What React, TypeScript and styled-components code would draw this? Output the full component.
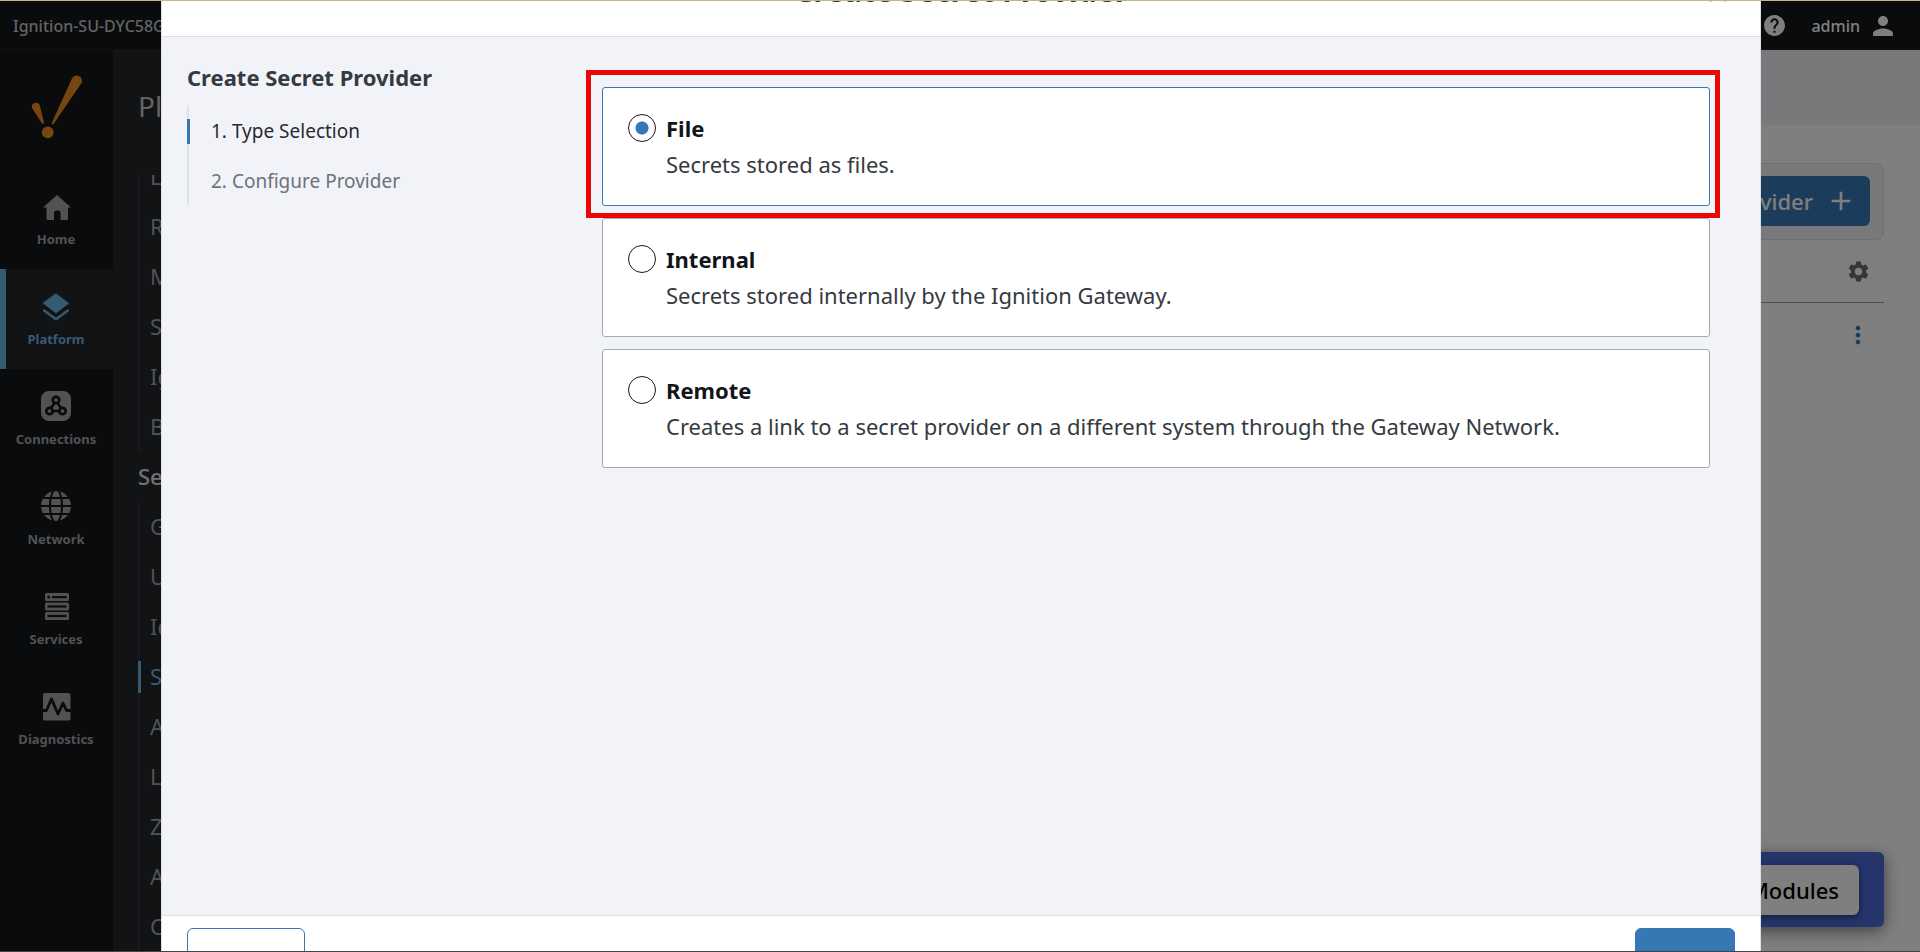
import React, { useState } from "react";
import styled, { createGlobalStyle } from "styled-components";
import { MdHelp, MdPerson, MdSettings, MdAdd, MdMoreVert, MdClose } from "react-icons/md";

const GlobalStyle = createGlobalStyle`
  * { box-sizing: border-box; }
  html, body, #root { height: 100%; margin: 0; }
  body { overflow: hidden; }
  body, button, input { font-family: "Noto Sans", "Open Sans", sans-serif; }
  a { color: inherit; text-decoration: none; }
  ul, ol { list-style: none; margin: 0; padding: 0; }
  h1, h2, h3, p { margin: 0; }
`;

const Shell = styled.div`
  position: relative;
  height: 100vh;
  display: flex;
  flex-direction: column;
  overflow: hidden;
  background: #fff;
`;

const TopBar = styled.header`
  height: 50px;
  flex: none;
  display: flex;
  align-items: center;
  justify-content: space-between;
  padding: 2px 22px 0 13px;
  background: #14161a;
  border-bottom: 1px solid #24262a;
  color: #fff;
  font-size: 16px;
  font-weight: 500;
`;

const GatewayName = styled.span`
  color: #c4c6c8;
`;

const UserTools = styled.div`
  display: flex;
  align-items: center;
  gap: 24px;
`;

const IconButton = styled.button<{ $color?: string }>`
  display: flex;
  align-items: center;
  gap: 8px;
  padding: 0;
  border: 0;
  background: none;
  color: ${(p) => p.$color ?? "inherit"};
  font-size: 16px;
  font-weight: 500;
`;

const Workspace = styled.div`
  flex: 1;
  min-height: 0;
  display: flex;
`;

const Sidebar = styled.nav`
  width: 113px;
  flex: none;
  background: #14161a;
`;

const Brand = styled.div`
  height: 119px;
  padding: 24px 0 0 31px;
`;

const SideLink = styled.a<{ $active?: boolean }>`
  height: 100px;
  display: flex;
  flex-direction: column;
  align-items: center;
  gap: 7px;
  padding: 21px 1px 0 0;
  font-size: 13px;
  line-height: 20px;
  font-weight: 700;
  color: ${(p) => (p.$active ? "#6fb4e6" : "#a2a4a8")};
  background: ${(p) => (p.$active ? "#24262a" : "transparent")};
  box-shadow: ${(p) => (p.$active ? "inset 6px 0 #6fb4e6" : "none")};
`;

const SubNav = styled.nav`
  width: 300px;
  flex: none;
  display: flex;
  flex-direction: column;
  padding-left: 25px;
  background: #24262a;
  color: #a2a4a8;
  font-size: 22px;
`;

const SubNavTitle = styled.h2`
  height: 125px;
  flex: none;
  padding-top: 36px;
  color: #c4c6c8;
  font-size: 28px;
  line-height: 40px;
  font-weight: 400;
`;

const SubNavScroll = styled.div`
  flex: 1;
  min-height: 0;
  display: flex;
  flex-direction: column;
  justify-content: flex-start;
  overflow: hidden;
`;

const SubNavGroup = styled.ul<{ $scrolled?: boolean }>`
  flex: none;
  border-left: 2px solid #32343a;
  margin-top: ${(p) => (p.$scrolled ? "-23px" : "0")};
`;

const SubNavHeading = styled.h3`
  flex: none;
  padding-bottom: 2px;
  font-size: 22px;
  line-height: 48px;
  font-weight: 500;
  color: #e0e2e4;
`;

const SubNavLink = styled.a<{ $active?: boolean }>`
  height: 50px;
  display: flex;
  align-items: flex-start;
  line-height: 48px;
  color: ${(p) => (p.$active ? "#6fb4e6" : "inherit")};

  &::before {
    content: "";
    width: 3px;
    height: 32px;
    margin: 9px 9px 0 -2px;
    background: ${(p) => (p.$active ? "#6fb4e6" : "transparent")};
  }
`;

const Content = styled.main`
  flex: 1;
  min-width: 0;
  display: flex;
  flex-direction: column;
`;

const Banner = styled.div`
  height: 75px;
  flex: none;
  background: #f2f3f8;
`;

const Panel = styled.section`
  flex: 1;
  display: flex;
  flex-direction: column;
  align-items: stretch;
  padding: 38px 36px 25px 36px;
`;

const Toolbar = styled.div`
  display: flex;
  justify-content: flex-end;
  padding: 12px 13px 13px;
  border: 1px solid #dcdfe4;
  border-radius: 8px;
  background: #f2f3f8;
`;

const CreateButton = styled.button`
  height: 50px;
  display: flex;
  align-items: center;
  gap: 12px;
  padding: 0 13px 0 20px;
  border: 0;
  border-radius: 6px;
  background: #3678b4;
  color: #fff;
  font-size: 22px;
  font-weight: 500;
`;

const ListHead = styled.div`
  height: 63px;
  display: flex;
  justify-content: flex-end;
  align-items: center;
  padding-right: 13px;
  border-bottom: 1px solid #96989c;
`;

const ListRow = styled.div`
  height: 64px;
  display: flex;
  justify-content: flex-end;
  align-items: center;
  padding-right: 12px;
`;

const Notice = styled.aside`
  align-self: flex-end;
  margin-top: auto;
  padding: 13px 25px 12px;
  border-radius: 6px;
  background: #4a6ad6;
  box-shadow: 0 4px 16px rgba(0, 0, 0, 0.5);
`;

const NoticeButton = styled.button`
  height: 50px;
  padding: 0 20px;
  border: 0;
  border-radius: 6px;
  background: #fff;
  color: #000;
  font-size: 22px;
  font-weight: 500;
  box-shadow: 0 2px 6px rgba(0, 0, 0, 0.5);
`;

const Overlay = styled.div`
  position: absolute;
  inset: 0;
  display: flex;
  align-items: center;
  justify-content: center;
  padding-left: 2px;
  background: rgba(0, 0, 0, 0.5);
  border-top: 1px solid #c8b18c;
  border-bottom: 1px solid #444;
  overflow: hidden;
`;

const Dialog = styled.form`
  width: calc(100% - 318px);
  height: calc(100% + 104px);
  flex: none;
  display: flex;
  flex-direction: column;
  background: #f2f3f8;
  border: 1px solid #dcdfe5;
`;

const DialogHeader = styled.header`
  height: 87px;
  flex: none;
  display: grid;
  grid-template-columns: 1fr auto 1fr;
  align-items: center;
  padding: 0 27px;
  background: #fff;
  border-bottom: 1px solid #dce0e5;
  color: #343a3f;

  h1 {
    grid-column: 2;
    padding-bottom: 4px;
    font-size: 30px;
    line-height: 40px;
    font-weight: 700;
  }

  button {
    justify-self: end;
  }
`;

const DialogBody = styled.div`
  flex: 1;
  min-height: 0;
  display: flex;
`;

const Steps = styled.nav`
  width: 440px;
  flex: none;
  padding: 25px;

  h2 {
    font-size: 22px;
    line-height: 30px;
    font-weight: 700;
    color: #343a3f;
  }

  ol {
    margin-top: 13px;
    border-left: 2px solid #dee1e5;
  }
`;

const Step = styled.li<{ $active?: boolean }>`
  height: 50px;
  display: flex;
  align-items: center;
  padding-top: 2px;
  font-size: 19px;
  color: ${(p) => (p.$active ? "#262b30" : "#6b7279")};

  &::before {
    content: "";
    width: 3px;
    height: 25px;
    margin: 0 21px 0 -2px;
    background: ${(p) => (p.$active ? "#3678b4" : "transparent")};
  }
`;

const Options = styled.div`
  flex: 1;
  display: flex;
  flex-direction: column;
  gap: 12px;
  padding: 50px 50px 0 0;
`;

const Option = styled.label<{ $selected: boolean; $marked?: boolean }>`
  position: relative;
  height: 119px;
  display: flex;
  align-items: flex-start;
  gap: 10px;
  padding: 25px;
  border: 1px solid ${(p) => (p.$selected ? "#3678b4" : "#a4abb3")};
  border-radius: 3px;
  background: #fff;

  &::after {
    content: "";
    display: ${(p) => (p.$marked ? "block" : "none")};
    position: absolute;
    inset: -18px -11px -13px -17px;
    border: 5px solid #e90909;
    pointer-events: none;
  }
`;

const Radio = styled.input`
  appearance: none;
  width: 28px;
  height: 28px;
  flex: none;
  margin: 1px 0 0;
  border: 1px solid #16191c;
  border-radius: 50%;
  background: #fff;

  &:checked {
    background: radial-gradient(circle, #3678b4 6px, #fff 7px);
  }
`;

const OptionText = styled.span`
  display: flex;
  flex-direction: column;
  gap: 6px;
  font-size: 22px;
  line-height: 30px;
  color: #343a3f;

  strong {
    color: #121518;
    font-weight: 700;
  }
`;

const DialogFooter = styled.footer`
  height: 87px;
  flex: none;
  display: flex;
  justify-content: space-between;
  align-items: flex-start;
  padding: 12px 25px;
  background: #fff;
  border-top: 1px solid #dfe2e4;
`;

const FooterButton = styled.button<{ $primary?: boolean }>`
  height: 60px;
  min-width: 100px;
  padding: 0 ${(p) => (p.$primary ? "20px" : "23px")};
  border: 1px solid #3678b4;
  border-radius: 6px;
  background: ${(p) => (p.$primary ? "#3678b4" : "#fff")};
  color: ${(p) => (p.$primary ? "#fff" : "#3678b4")};
  font-size: 22px;
  font-weight: 500;
`;

const Logo = () => (
  <svg width="52" height="66" viewBox="0 0 52 66" fill="#ee8c1e" aria-label="Ignition">
    <path d="M20.500 49.500 L41 4.500 A5.200 5.200 0 0 1 50.500 9 L22.500 50 Q21 50.500 20.500 49.500 Z" />
    <path d="M1.300 34.500 A4 4 0 0 1 8.700 31 L13 48.500 Q12.500 50.500 11 49.500 Z" />
    <circle cx="16.700" cy="58.300" r="5.900" />
  </svg>
);

const HomeIcon = () => (
  <svg width="32" height="32" viewBox="0 0 32 32" fill="currentColor">
    <path d="M17 5 L31 17.500 H28 V28.500 Q28 30 26.500 30 H20.500 V23 Q20.500 20.500 18 20.500 H16.500 Q14 20.500 14 23 V30 H8 Q6.500 30 6.500 28.500 V17.500 H3 Z" strokeLinejoin="round" />
  </svg>
);

const PlatformIcon = () => (
  <svg width="32" height="32" viewBox="0 0 32 32" stroke="currentColor" strokeLinejoin="round" strokeLinecap="round">
    <path d="M16 4 L28.500 13.300 L16 22.800 L3.500 13.300 Z" fill="currentColor" strokeWidth="1" />
    <path d="M4.200 20.500 L16 29.200 L27.800 20.500" fill="none" strokeWidth="2.500" />
  </svg>
);

const ConnectionsIcon = () => (
  <svg width="32" height="32" viewBox="0 0 32 32">
    <rect x="1" y="1" width="30" height="30" rx="8" fill="currentColor" />
    <g fill="none" stroke="#14161a" strokeWidth="2.700">
      <path d="M14.500 13 L11 18 M17.500 13 L21 18 M13 21 H19" />
      <circle cx="16" cy="10" r="3.200" />
      <circle cx="9.500" cy="21" r="3.200" />
      <circle cx="22.500" cy="21" r="3.200" />
    </g>
  </svg>
);

const NetworkIcon = () => (
  <svg width="32" height="32" viewBox="0 0 32 32">
    <circle cx="16" cy="16" r="15" fill="currentColor" />
    <g fill="none" stroke="#14161a" strokeWidth="2">
      <ellipse cx="16" cy="16" rx="6" ry="16.500" />
      <path d="M0 16 H32 M0 8 H32 M0 24 H32" />
    </g>
  </svg>
);

const ServicesIcon = () => (
  <svg width="32" height="32" viewBox="0 0 32 32">
    <g fill="currentColor">
      <rect x="5" y="3" width="24" height="8" rx="1.500" />
      <rect x="5" y="12.500" width="24" height="8" rx="1.500" />
      <rect x="5" y="22" width="24" height="8" rx="1.500" />
    </g>
    <g fill="#14161a">
      <circle cx="8.700" cy="7" r="1.500" />
      <rect x="12" y="6" width="14.500" height="2.200" />
      <rect x="7.500" y="15.400" width="19" height="2.200" />
      <rect x="7.500" y="24.900" width="19" height="2.200" />
    </g>
  </svg>
);

const DiagnosticsIcon = () => (
  <svg width="32" height="32" viewBox="0 0 32 32">
    <rect x="3" y="3" width="27.500" height="27.500" rx="2" fill="currentColor" />
    <path
      d="M2 20.500 H6.500 L11.500 9 L18 24 L23 13 L26.500 20.500 H31"
      fill="none"
      stroke="#14161a"
      strokeWidth="2.800"
      strokeLinejoin="round"
    />
  </svg>
);

const sections = [
  { label: "Home", icon: <HomeIcon /> },
  { label: "Platform", icon: <PlatformIcon />, active: true },
  { label: "Connections", icon: <ConnectionsIcon /> },
  { label: "Network", icon: <NetworkIcon /> },
  { label: "Services", icon: <ServicesIcon /> },
  { label: "Diagnostics", icon: <DiagnosticsIcon /> },
];

const systemLinks = ["Licensing", "Redundancy", "Modules", "System", "Ignition Exchange", "Backup"];
const securityLinks = [
  "General Settings",
  "User Sources",
  "Identity Providers",
  "Secret Providers",
  "Audit Profiles",
  "Levels",
  "Zones",
  "API Keys",
  "Certificates",
];

const providerTypes = [
  { id: "file", name: "File", text: "Secrets stored as files." },
  { id: "internal", name: "Internal", text: "Secrets stored internally by the Ignition Gateway." },
  {
    id: "remote",
    name: "Remote",
    text: "Creates a link to a secret provider on a different system through the Gateway Network.",
  },
];

export default function App() {
  const [type, setType] = useState("file");

  return (
    <Shell>
      <GlobalStyle />
      <TopBar>
        <GatewayName>Ignition-SU-DYC58G3</GatewayName>
        <UserTools>
          <IconButton aria-label="Help">
            <MdHelp size={25} />
          </IconButton>
          <IconButton>
            admin
            <MdPerson size={30} />
          </IconButton>
        </UserTools>
      </TopBar>
      <Workspace>
        <Sidebar>
          <Brand>
            <Logo />
          </Brand>
          {sections.map((s) => (
            <SideLink key={s.label} href="#" $active={s.active}>
              {s.icon}
              {s.label}
            </SideLink>
          ))}
        </Sidebar>
        <SubNav>
          <SubNavTitle>Platform</SubNavTitle>
          <SubNavScroll>
            <SubNavGroup $scrolled>
              {systemLinks.map((l) => (
                <li key={l}>
                  <SubNavLink href="#">{l}</SubNavLink>
                </li>
              ))}
            </SubNavGroup>
            <SubNavHeading>Security</SubNavHeading>
            <SubNavGroup>
              {securityLinks.map((l) => (
                <li key={l}>
                  <SubNavLink href="#" $active={l === "Secret Providers"}>
                    {l}
                  </SubNavLink>
                </li>
              ))}
            </SubNavGroup>
          </SubNavScroll>
        </SubNav>
        <Content>
          <Banner />
          <Panel>
            <Toolbar>
              <CreateButton>
                Create Secret Provider
                <MdAdd size={32} />
              </CreateButton>
            </Toolbar>
            <ListHead>
              <IconButton aria-label="Table settings" $color="#696d72">
                <MdSettings size={25} />
              </IconButton>
            </ListHead>
            <ListRow>
              <IconButton aria-label="Row actions" $color="#3678b4">
                <MdMoreVert size={28} />
              </IconButton>
            </ListRow>
            <Notice>
              <NoticeButton>View Modules</NoticeButton>
            </Notice>
          </Panel>
        </Content>
      </Workspace>
      <Overlay>
        <Dialog>
          <DialogHeader>
            <h1>Create Secret Provider</h1>
            <IconButton type="button" aria-label="Close">
              <MdClose size={30} />
            </IconButton>
          </DialogHeader>
          <DialogBody>
            <Steps>
              <h2>Create Secret Provider</h2>
              <ol>
                <Step $active>1. Type Selection</Step>
                <Step>2. Configure Provider</Step>
              </ol>
            </Steps>
            <Options role="radiogroup" aria-label="Provider type">
              {providerTypes.map((p) => (
                <Option key={p.id} $selected={type === p.id} $marked={p.id === "file"}>
                  <Radio
                    type="radio"
                    name="provider-type"
                    checked={type === p.id}
                    onChange={() => setType(p.id)}
                  />
                  <OptionText>
                    <strong>{p.name}</strong>
                    <span>{p.text}</span>
                  </OptionText>
                </Option>
              ))}
            </Options>
          </DialogBody>
          <DialogFooter>
            <FooterButton type="button">Cancel</FooterButton>
            <FooterButton type="button" $primary>
              Next
            </FooterButton>
          </DialogFooter>
        </Dialog>
      </Overlay>
    </Shell>
  );
}
